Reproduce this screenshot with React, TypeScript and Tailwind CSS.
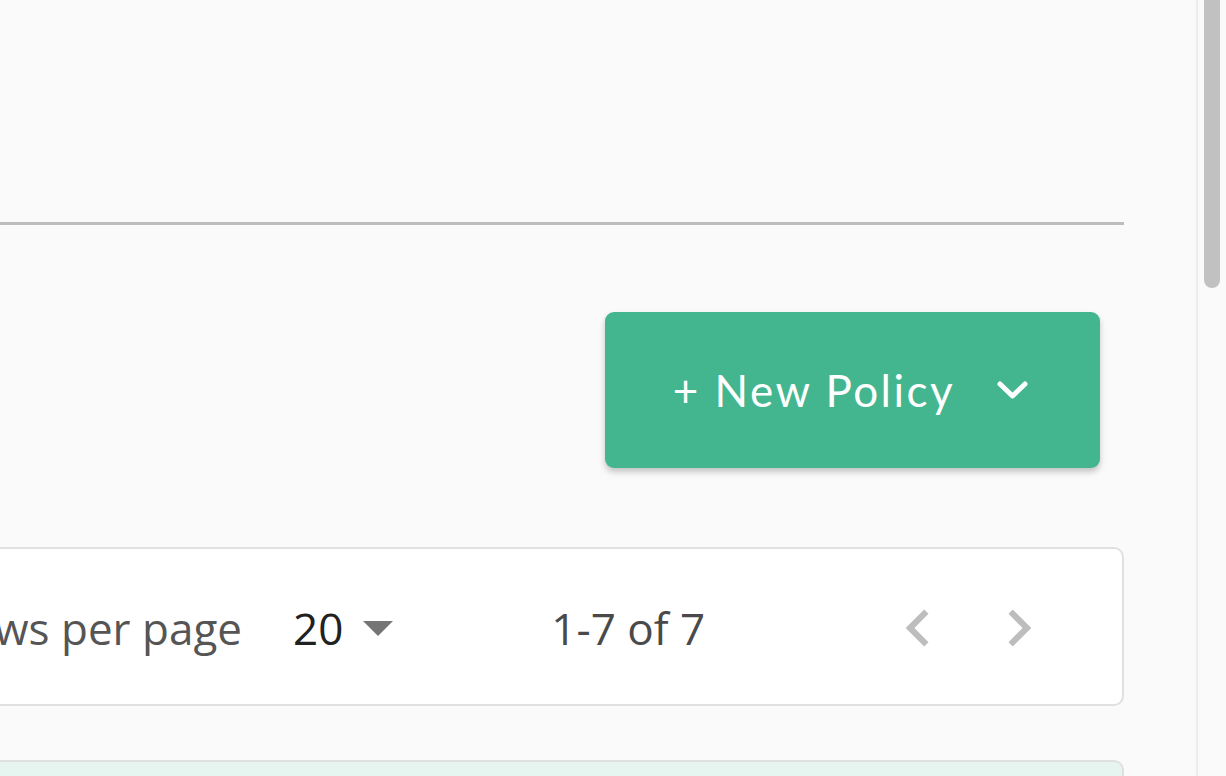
import React from 'react';

const ChevronLeft = () => (
    <svg width="74" height="74" viewBox="0 0 24 24" fill="#bdbdbd">
        <path d="M15.41 7.41L14 6l-6 6 6 6 1.41-1.41L10.83 12z" />
    </svg>
);

const ChevronRight = () => (
    <svg width="74" height="74" viewBox="0 0 24 24" fill="#bdbdbd">
        <path d="M10 6L8.59 7.41 13.17 12l-4.58 4.59L10 18l6-6z" />
    </svg>
);

export default function App() {
    return (
        <div className="flex h-[776px] w-full overflow-hidden bg-[#fafafa]">
            <div className="flex-1 overflow-hidden">
                <div className="w-[1124px]">
                    <div className="h-[222px]" />
                    <div className="h-[3px] bg-[#bdbdbd]" />

                    {/* action row */}
                    <div className="flex justify-end pr-[24px] pt-[87px]">
                        <button className="flex h-[156px] w-[495px] items-center justify-center gap-[42px] rounded-[9px] bg-[#43b68f] pr-[4px] text-white shadow-[0_4px_6px_rgba(0,0,0,0.22)]">
                            <span className="font-['Lato',sans-serif] text-[44px] tracking-[2.5px]">+ New Policy</span>
                            <svg width="31" height="19" viewBox="0 0 31 19" fill="none">
                                <polyline points="3,3 15.5,15 28,3" stroke="#ffffff" strokeWidth="5" strokeLinecap="round" strokeLinejoin="round" />
                            </svg>
                        </button>
                    </div>

                    {/* pagination */}
                    <div className="mt-[79px] flex h-[159px] items-center rounded-r-[10px] border-2 border-l-0 border-[#e0e0e0] bg-white pt-[3px] font-['Open_Sans',sans-serif] text-[44px]">
                        <div className="flex w-[242px] shrink-0 justify-end whitespace-nowrap text-[#555555]">Rows per page</div>
                        <span className="ml-[51px] text-[#212121]">20</span>
                        <svg className="ml-[20px]" width="30" height="15" viewBox="0 0 30 15">
                            <polygon points="0,0 30,0 15,15" fill="#757575" />
                        </svg>
                        <span className="ml-[158px] text-[#4a4a4a]">1-7 of 7</span>
                        <div className="ml-[176px]"><ChevronLeft /></div>
                        <div className="ml-[27px]"><ChevronRight /></div>
                    </div>

                    <div className="mt-[54px] h-[60px] rounded-tr-[10px] border-2 border-l-0 border-[#e0e0e0] bg-[#e6f5f0]" />
                </div>
            </div>

            {/* scrollbar */}
            <div className="flex w-[30px] shrink-0 justify-center border-l-2 border-[#ececec] bg-[#fafafa]">
                <div className="h-[288px] w-[16px] rounded-b-full bg-[#c1c1c1]" />
            </div>
        </div>
    );
}
